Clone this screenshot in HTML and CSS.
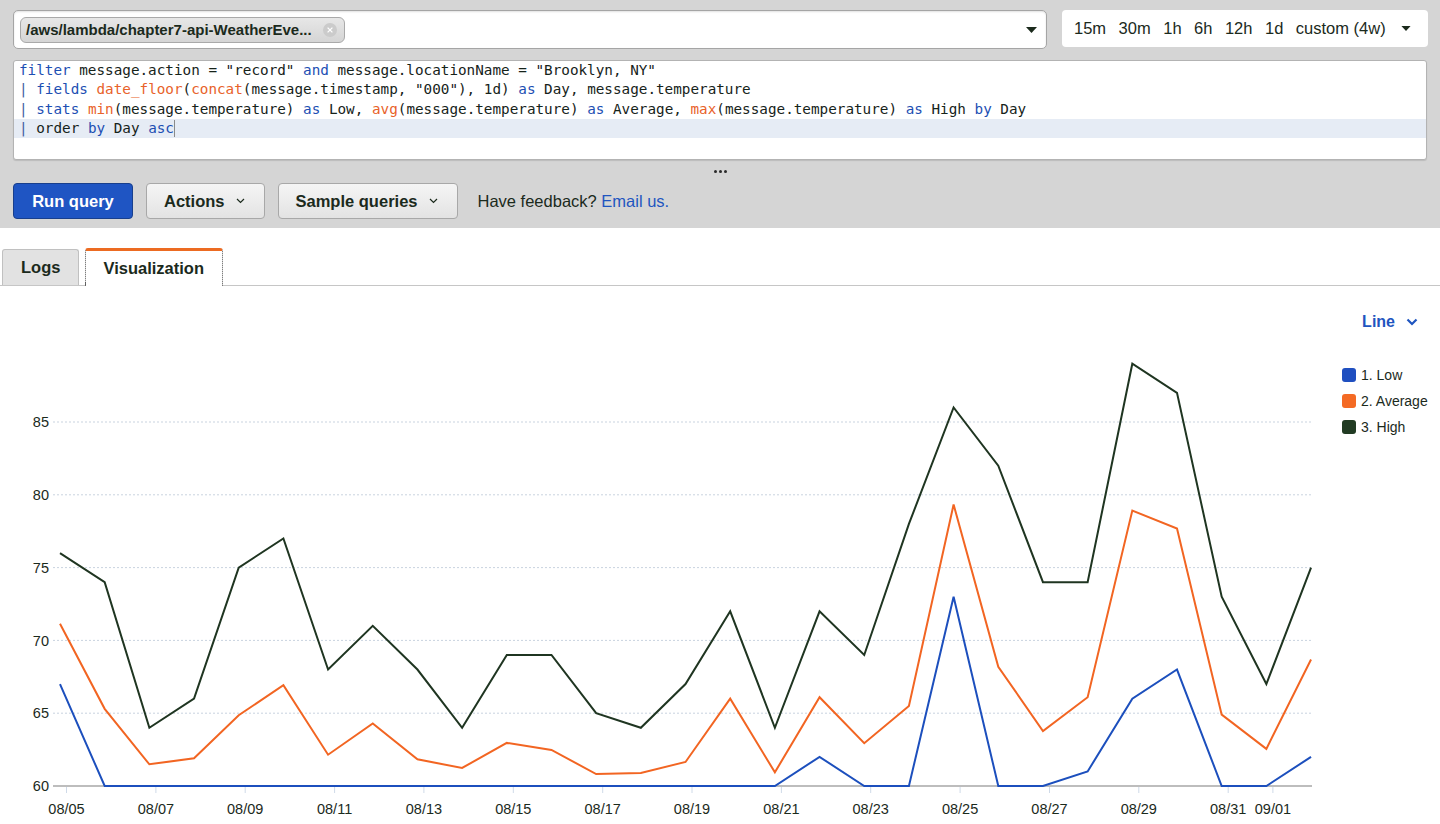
FILE: index.html
```html
<!DOCTYPE html>
<html lang="en">
<head>
<meta charset="utf-8">
<title>CloudWatch Logs Insights</title>
<link rel="stylesheet" href="styles.css">
</head>
<body>
<div class="top">
  <div class="row1">
    <div class="lg-select">
      <span class="chip">
        <span class="chip-text">/aws/lambda/chapter7-api-WeatherEve...</span>
        <svg class="chip-x" viewBox="0 0 14 14"><circle cx="7" cy="7" r="7" fill="#cbcbcb"/><path d="M4.6 4.6l4.8 4.8M9.4 4.6l-4.8 4.8" stroke="#fff" stroke-width="1.3"/></svg>
      </span>
      <svg class="caret" viewBox="0 0 11 6"><polygon points="0,0 11,0 5.5,6" fill="#1b2a1c"/></svg>
    </div>
    <div class="range">
      <span>15m</span><span>30m</span><span>1h</span><span>6h</span><span>12h</span><span>1d</span><span>custom (4w)</span>
      <svg class="caret small" viewBox="0 0 11 6"><polygon points="0,0 11,0 5.5,6" fill="#1b2a1c"/></svg>
    </div>
  </div>
  <div class="editor">
    <div class="ln"><span class="k">filter</span> message.action = "record" <span class="k">and</span> message.locationName = "Brooklyn, NY"</div>
    <div class="ln"><span class="p">|</span> <span class="k">fields</span> <span class="f">date_floor</span>(<span class="f">concat</span>(message.timestamp, "000"), 1d) <span class="k">as</span> Day, message.temperature</div>
    <div class="ln"><span class="p">|</span> <span class="k">stats</span> <span class="f">min</span>(message.temperature) <span class="k">as</span> Low, <span class="f">avg</span>(message.temperature) <span class="k">as</span> Average, <span class="f">max</span>(message.temperature) <span class="k">as</span> High <span class="k">by</span> Day</div>
    <div class="ln active"><span class="p">|</span> order <span class="k">by</span> Day <span class="k">asc</span><span class="cursor"></span></div>
  </div>
  <div class="handle"><i></i><i></i><i></i></div>
  <div class="actions">
    <button class="btn btn-primary">Run query</button>
    <button class="btn btn-secondary">Actions <svg class="chev" viewBox="0 0 9 6"><polyline points="1,1 4.5,4.5 8,1" fill="none" stroke="#1b2a1c" stroke-width="1.2"/></svg></button>
    <button class="btn btn-secondary">Sample queries <svg class="chev" viewBox="0 0 9 6"><polyline points="1,1 4.5,4.5 8,1" fill="none" stroke="#1b2a1c" stroke-width="1.2"/></svg></button>
    <span class="feedback">Have feedback? <a href="#">Email us.</a></span>
  </div>
</div>

<div class="tabs">
  <div class="tab">Logs</div>
  <div class="tab active">Visualization</div>
</div>

<div class="chart">
  <svg class="plot" viewBox="0 0 1330 538">
    <g class="grid">
      <line x1="53" y1="427.2" x2="1312" y2="427.2"/>
      <line x1="53" y1="354.4" x2="1312" y2="354.4"/>
      <line x1="53" y1="281.6" x2="1312" y2="281.6"/>
      <line x1="53" y1="208.8" x2="1312" y2="208.8"/>
      <line x1="53" y1="136" x2="1312" y2="136"/>
    </g>
    <line class="axis" x1="53" y1="500" x2="1312" y2="500"/>
    <g class="ylabels">
      <text x="49" y="505.2">60</text>
      <text x="49" y="432.4">65</text>
      <text x="49" y="359.6">70</text>
      <text x="49" y="286.8">75</text>
      <text x="49" y="214">80</text>
      <text x="49" y="141.2">85</text>
    </g>
    <g class="ticks">
      <line x1="66.5" y1="501" x2="66.5" y2="507"/>
      <line x1="155.9" y1="501" x2="155.9" y2="507"/>
      <line x1="245.2" y1="501" x2="245.2" y2="507"/>
      <line x1="334.6" y1="501" x2="334.6" y2="507"/>
      <line x1="423.9" y1="501" x2="423.9" y2="507"/>
      <line x1="513.3" y1="501" x2="513.3" y2="507"/>
      <line x1="602.7" y1="501" x2="602.7" y2="507"/>
      <line x1="692" y1="501" x2="692" y2="507"/>
      <line x1="781.4" y1="501" x2="781.4" y2="507"/>
      <line x1="870.7" y1="501" x2="870.7" y2="507"/>
      <line x1="960.1" y1="501" x2="960.1" y2="507"/>
      <line x1="1049.5" y1="501" x2="1049.5" y2="507"/>
      <line x1="1138.8" y1="501" x2="1138.8" y2="507"/>
      <line x1="1228.2" y1="501" x2="1228.2" y2="507"/>
      <line x1="1272.9" y1="501" x2="1272.9" y2="507"/>
    </g>
    <g class="xlabels">
      <text x="66.5" y="528">08/05</text>
      <text x="155.9" y="528">08/07</text>
      <text x="245.2" y="528">08/09</text>
      <text x="334.6" y="528">08/11</text>
      <text x="423.9" y="528">08/13</text>
      <text x="513.3" y="528">08/15</text>
      <text x="602.7" y="528">08/17</text>
      <text x="692" y="528">08/19</text>
      <text x="781.4" y="528">08/21</text>
      <text x="870.7" y="528">08/23</text>
      <text x="960.1" y="528">08/25</text>
      <text x="1049.5" y="528">08/27</text>
      <text x="1138.8" y="528">08/29</text>
      <text x="1228.2" y="528">08/31</text>
      <text x="1272.9" y="528">09/01</text>
    </g>
    <g transform="translate(60 500) scale(44.68 -14.56)">
      <polyline class="s-high" points="0,16 1,14 2,4 3,6 4,15 5,17 6,8 7,11 8,8 9,4 10,9 11,9 12,5 13,4 14,7 15,12 16,4 17,12 18,9 19,18 20,26 21,22 22,14 23,14 24,29 25,27 26,13 27,7 28,15"/>
      <polyline class="s-avg" points="0,11.14 1,5.3 2,1.49 3,1.9 4,4.86 5,6.92 6,2.15 7,4.29 8,1.83 9,1.24 10,2.96 11,2.48 12,0.82 13,0.89 14,1.65 15,6 16,0.94 17,6.1 18,2.94 19,5.5 20,19.33 21,8.19 22,3.78 23,6.1 24,18.92 25,17.68 26,4.9 27,2.55 28,8.69"/>
      <polyline class="s-low" points="0,7 1,0 2,0 3,0 4,0 5,0 6,0 7,0 8,0 9,0 10,0 11,0 12,0 13,0 14,0 15,0 16,0 17,2 18,0 19,0 20,13 21,0 22,0 23,1 24,6 25,8 26,0 27,0 28,2"/>
    </g>
  </svg>
  <div class="side">
    <div class="line-dd">Line <svg class="line-chev" viewBox="0 0 12 8"><polyline points="1.5,1.5 6,6 10.5,1.5" fill="none" stroke="#1f55c0" stroke-width="2.2"/></svg></div>
    <ul class="legend">
      <li><span class="sw sw-low"></span>1. Low</li>
      <li><span class="sw sw-avg"></span>2. Average</li>
      <li><span class="sw sw-high"></span>3. High</li>
    </ul>
  </div>
</div>
</body>
</html>
```

FILE: styles.css
```css
* { box-sizing: border-box; }
html, body { margin: 0; padding: 0; }
body {
  width: 1440px;
  height: 824px;
  overflow: hidden;
  background: #fff;
  font-family: "Liberation Sans", Arial, sans-serif;
  color: #1b2a1c;
}

/* ---------- top gray area ---------- */
.top {
  background: #d5d5d5;
  padding: 10px 12px 9px 13px;
}
.row1 {
  display: flex;
  gap: 15px;
  align-items: flex-start;
}
.lg-select {
  flex: 1;
  height: 39px;
  background: #fff;
  border: 1px solid #a5a5a5;
  border-radius: 5px;
  box-shadow: inset 0 1px 2px rgba(0,0,0,0.12);
  display: flex;
  align-items: center;
  padding: 0 9px 0 6px;
}
.chip {
  display: flex;
  align-items: center;
  gap: 11px;
  height: 26px;
  padding: 0 7px 0 5px;
  background: linear-gradient(#e7e7e7, #d5d5d5);
  border: 1px solid #a9a9a9;
  border-radius: 6px;
}
.chip-text {
  font-weight: bold;
  font-size: 15px;
  color: #1b2a1c;
}
.chip-x { width: 14px; height: 14px; display: block; }
.caret { margin-left: auto; width: 11px; height: 6px; display: block; }
.caret.small { width: 10px; height: 5px; }

.range {
  width: 366px;
  height: 37px;
  background: #fff;
  border-radius: 4px;
  display: flex;
  align-items: center;
  gap: 12.5px;
  padding: 0 17px 0 12px;
  font-size: 16.5px;
}

/* ---------- editor ---------- */
.editor {
  margin-top: 11px;
  margin-right: 1px;
  height: 100px;
  background: #fff;
  border: 1px solid #b3b3b3;
  border-radius: 3px;
  box-shadow: 0 1px 1px rgba(0,0,0,0.12);
  font-family: "DejaVu Sans Mono", "Liberation Mono", monospace;
  font-size: 14.3px;
  color: #16231a;
}
.ln {
  height: 19.3px;
  line-height: 19.3px;
  padding-left: 5px;
  white-space: pre;
}
.ln.active { background: #e6ecf5; }
.k { color: #1d4fb3; }
.p { color: #3d5f9e; }
.f { color: #e8622a; }
.cursor {
  display: inline-block;
  width: 1px;
  height: 17px;
  background: #8a8a8a;
  vertical-align: middle;
}

.handle {
  height: 23px;
  display: flex;
  align-items: center;
  justify-content: center;
  gap: 2px;
}
.handle i {
  width: 3px;
  height: 3px;
  border-radius: 50%;
  background: #2a2a2a;
}

/* ---------- actions ---------- */
.actions {
  display: flex;
  align-items: center;
  gap: 13px;
  height: 36px;
}
.btn {
  height: 36px;
  border-radius: 4px;
  font-family: inherit;
  font-weight: bold;
  font-size: 16.5px;
  display: flex;
  align-items: center;
  margin: 0;
  cursor: pointer;
}
.btn-primary {
  width: 120px;
  justify-content: center;
  background: #1f55c3;
  color: #fff;
  border: 1px solid #183f8d;
  padding: 0;
}
.btn-secondary {
  background: linear-gradient(#f5f5f5, #e3e3e3);
  color: #1b2a1c;
  border: 1px solid #a8a8a8;
  padding: 0 19px 0 17px;
  gap: 11px;
}
.chev { width: 9px; height: 6px; display: block; }
.feedback {
  margin-left: 7px;
  font-size: 16.5px;
}
.feedback a { color: #1f55c0; text-decoration: none; }

/* ---------- tabs ---------- */
.tabs {
  display: flex;
  align-items: flex-end;
  gap: 6px;
  margin-top: 20px;
  padding-left: 2px;
  height: 38px;
  border-bottom: 1px solid #c6c6c6;
}
.tab {
  height: 36px;
  display: flex;
  align-items: center;
  padding: 0 18px;
  font-weight: bold;
  font-size: 16.5px;
  background: #e2e2e2;
  border: 1px solid #c0c0c0;
  border-bottom: none;
  border-radius: 3px 3px 0 0;
}
.tab.active {
  height: 38px;
  margin-bottom: -1px;
  padding: 0 18px 0 17px;
  background: #fff;
  border: 1px dotted #555;
  border-top: 3px solid #ec6b22;
  border-bottom: none;
}

/* ---------- chart ---------- */
.chart { display: flex; }
.plot { display: block; width: 1330px; height: 538px; flex: none; }
.grid line { stroke: #c9d3df; stroke-width: 1; stroke-dasharray: 2 2; }
.axis { stroke: #bdbdbd; stroke-width: 2; }
.ticks line { stroke: #cfdae8; stroke-width: 1; }
.ylabels text, .xlabels text {
  font-family: "Liberation Sans", Arial, sans-serif;
  font-size: 14.5px;
  fill: #1b2a1c;
}
.ylabels text { text-anchor: end; }
.xlabels text { text-anchor: middle; }
.plot polyline {
  fill: none;
  stroke-width: 2;
  vector-effect: non-scaling-stroke;
  stroke-linejoin: miter;
}
.s-high { stroke: #1f3521; }
.s-avg { stroke: #f26522; }
.s-low { stroke: #1c4fbd; }

.side { flex: 1; }
.line-dd {
  display: flex;
  justify-content: flex-end;
  align-items: center;
  gap: 11px;
  padding: 26px 22px 0 0;
  height: 46px;
  font-weight: bold;
  font-size: 16px;
  color: #1f55c0;
  line-height: 20px;
}
.line-chev { width: 12px; height: 8px; display: block; }
.legend {
  list-style: none;
  margin: 30px 0 0 0;
  padding: 0 0 0 12px;
}
.legend li {
  height: 26px;
  display: flex;
  align-items: center;
  gap: 5px;
  font-size: 14px;
  white-space: nowrap;
}
.sw {
  width: 14px;
  height: 14px;
  border-radius: 3px;
  flex: none;
}
.sw-low { background: #1f4fc0; }
.sw-avg { background: #f46a24; }
.sw-high { background: #213b23; }
```
